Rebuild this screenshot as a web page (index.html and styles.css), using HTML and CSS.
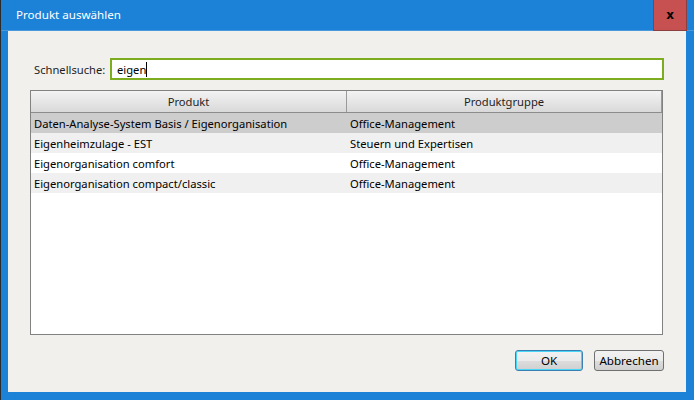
FILE: index.html
```html
<!DOCTYPE html>
<html lang="de">
<head>
<meta charset="utf-8">
<title>Produkt auswählen</title>
<link rel="stylesheet" href="styles.css">
</head>
<body>
<div class="window">
  <div class="titlebar">
    <span class="title">Produkt auswählen</span>
    <div class="close"><span class="x">x</span></div>
  </div>
  <div class="content">
    <div class="search-row">
      <label class="search-label">Schnellsuche:</label>
      <div class="search-field"><span class="value">eigen</span><span class="caret"></span></div>
    </div>
    <div class="grid">
      <div class="grid-header">
        <div class="hcell col1">Produkt</div>
        <div class="hcell col2">Produktgruppe</div>
      </div>
      <div class="row selected"><div class="cell col1">Daten-Analyse-System Basis / Eigenorganisation</div><div class="cell col2">Office-Management</div></div>
      <div class="row alt"><div class="cell col1">Eigenheimzulage - EST</div><div class="cell col2">Steuern und Expertisen</div></div>
      <div class="row"><div class="cell col1">Eigenorganisation comfort</div><div class="cell col2">Office-Management</div></div>
      <div class="row alt"><div class="cell col1">Eigenorganisation compact/classic</div><div class="cell col2">Office-Management</div></div>
    </div>
    <div class="buttons">
      <button class="btn btn-default">OK</button>
      <button class="btn">Abbrechen</button>
    </div>
  </div>
</div>
</body>
</html>
```

FILE: styles.css
```css
* { box-sizing: border-box; }
html, body { margin: 0; padding: 0; }
body {
  width: 694px;
  height: 400px;
  overflow: hidden;
  font-family: "Noto Sans", "Open Sans", sans-serif;
  font-size: 11.2px;
  color: #000;
  background: #1b82d8;
}
.window {
  width: 694px;
  height: 400px;
  background: #1b82d8;
  border-left: 1px solid #2b2b2b;
  display: flex;
  flex-direction: column;
}
.titlebar {
  height: 31px;
  display: flex;
  align-items: flex-start;
  justify-content: space-between;
  border-bottom: 1px solid #4a98dc;
}
.title {
  color: #fff;
  font-size: 11.6px;
  padding: 7px 0 0 15px;
}
.close {
  width: 34px;
  height: 31px;
  margin-right: 7px;
  background: #c75050;
  border: 1px solid #8a4040;
  border-top: none;
  display: flex;
  align-items: center;
  justify-content: center;
}
.close .x {
  font-family: "DejaVu Sans", sans-serif;
  font-weight: bold;
  font-size: 12px;
  line-height: 1;
  margin-top: -1px;
}
.content {
  flex: 1;
  margin: 0 8px 8px 7px;
  background: #f1f0ec;
  padding: 27px 22px 0 22px;
  display: flex;
  flex-direction: column;
}
.search-row {
  display: flex;
  align-items: center;
  height: 22px;
}
.search-label {
  width: 80px;
  padding-left: 4px;
  color: #1e1e1e;
}
.search-field {
  flex: 1;
  height: 22px;
  border: 2px solid #7dac1f;
  background: #fff;
  display: flex;
  align-items: center;
  padding-left: 5px;
}
.caret {
  display: inline-block;
  width: 1px;
  height: 15px;
  background: #000;
}
.grid {
  margin-top: 10px;
  height: 245px;
  border: 1px solid #828282;
  background: #fff;
  width: 633px;
}
.grid-header {
  display: flex;
  height: 22px;
  border-bottom: 1px solid #8c8c8c;
  background: linear-gradient(#f3f3f3, #d9d9d9);
}
.hcell {
  display: flex;
  align-items: center;
  justify-content: center;
  color: #1e1e1e;
}
.hcell.col1 { width: 316px; border-right: 1px solid #9a9a9a; }
.hcell.col2 { flex: 1; border-right: 1px solid #9a9a9a; }
.row {
  display: flex;
  height: 20px;
  align-items: center;
}
.row.selected { background: #cdcdcd; }
.row.alt { background: #f0f0f0; }
.cell { padding-left: 3px; white-space: nowrap; color: #000; }
.cell.col1 { width: 316px; }
.cell.col2 { flex: 1; }
.buttons {
  display: flex;
  justify-content: flex-end;
  gap: 11px;
  margin-top: 15px;
}
.btn {
  font-family: inherit;
  font-size: 11.6px;
  height: 21px;
  border: 1px solid #707070;
  border-radius: 3px;
  background: linear-gradient(#f2f2f2 0%, #ebebeb 50%, #dddddd 51%, #cfcfcf 100%);
  color: #000;
  padding: 0;
}
.btn-default {
  width: 68px;
  border-color: #3c7fb1;
  box-shadow: inset 0 0 0 1px #48d6f8;
}
.btn:not(.btn-default) { width: 70px; }
```
